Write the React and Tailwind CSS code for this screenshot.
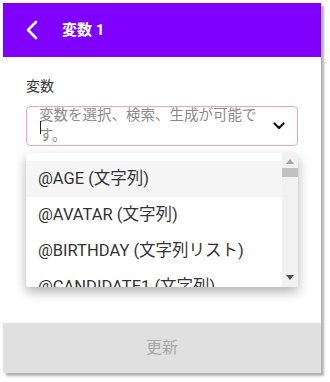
export default function App() {
  const items = [
    "@AGE (文字列)",
    "@AVATAR (文字列)",
    "@BIRTHDAY (文字列リスト)",
    "@CANDIDATE1 (文字列)",
  ];
  return (
    <div className="w-[330px] h-[382px] bg-white pt-[3px] pl-[3px]" style={{ fontFamily: "Roboto, 'Noto Sans CJK JP', sans-serif" }}>
      <div className="relative w-[318px] h-[370px] bg-white flex flex-col shadow-[3px_3px_2px_rgba(0,0,0,0.3)]">
        <div className="h-[54px] bg-[#8000ff] flex items-center shrink-0">
          <svg width="14" height="20" viewBox="0 0 14 20" className="ml-[22px]">
            <path d="M11 2 L3 10 L11 18" fill="none" stroke="white" strokeWidth="2.6" strokeLinecap="round" strokeLinejoin="round" />
          </svg>
          <span className="ml-[23px] text-white font-bold text-[15px]">変数 1</span>
        </div>
        <div className="flex-1 px-[23px] pt-[19px]">
          <div className="text-[14px] leading-[20px] text-[#333]">変数</div>
          <div className="relative mt-[10px] h-[40px] border border-[#f7a3b5] rounded-[4px] overflow-hidden">
            <div className="pl-[12px] pr-[40px] -mt-[1px] text-[14.5px] leading-[20px] text-[#8a8a8a]">変数を選択、検索、生成が可能です。</div>
            <div className="absolute left-[13px] top-[14px] w-px h-[13px] bg-[#222]" />
            <svg width="12" height="8" viewBox="0 0 12 8" className="absolute right-[12px] top-[15px]">
              <path d="M1.5 1.5 L6 6 L10.5 1.5" fill="none" stroke="#111" strokeWidth="2.2" strokeLinecap="round" strokeLinejoin="round" />
            </svg>
          </div>
          <div className="mt-[6px] text-[12px] leading-[16px] text-[#f0506e]">変数を選択してください</div>
        </div>
        <div className="h-[50px] bg-[#e0e0e0] flex items-center justify-center shrink-0">
          <span className="text-[16px] text-[#a8a8a8]">更新</span>
        </div>
        <div className="absolute left-[23px] top-[150px] w-[272px] h-[134px] bg-white rounded-[3px] shadow-[0_5px_12px_rgba(0,0,0,0.3)] flex overflow-hidden">
          <div className="flex-1 pt-[8px] overflow-hidden">
            {items.map((t, i) => (
              <div key={t} className={"h-[36px] flex items-center pl-[12px] text-[16.5px] text-[#333] whitespace-nowrap " + (i === 0 ? "bg-[#f5f5f5]" : "")}>
                {t}
              </div>
            ))}
          </div>
          <div className="w-[16px] bg-[#f1f1f1] flex flex-col items-center relative">
            <svg width="8" height="5" viewBox="0 0 8 5" className="mt-[6px]">
              <path d="M0 5 L4 0 L8 5 Z" fill="#a3a3a3" />
            </svg>
            <div className="mt-[4px] w-[16px] h-[9px] bg-[#c1c1c1]" />
            <svg width="8" height="5" viewBox="0 0 8 5" className="absolute bottom-[7px] left-[4px]">
              <path d="M0 0 L8 0 L4 5 Z" fill="#505050" />
            </svg>
          </div>
        </div>
      </div>
    </div>
  );
}
